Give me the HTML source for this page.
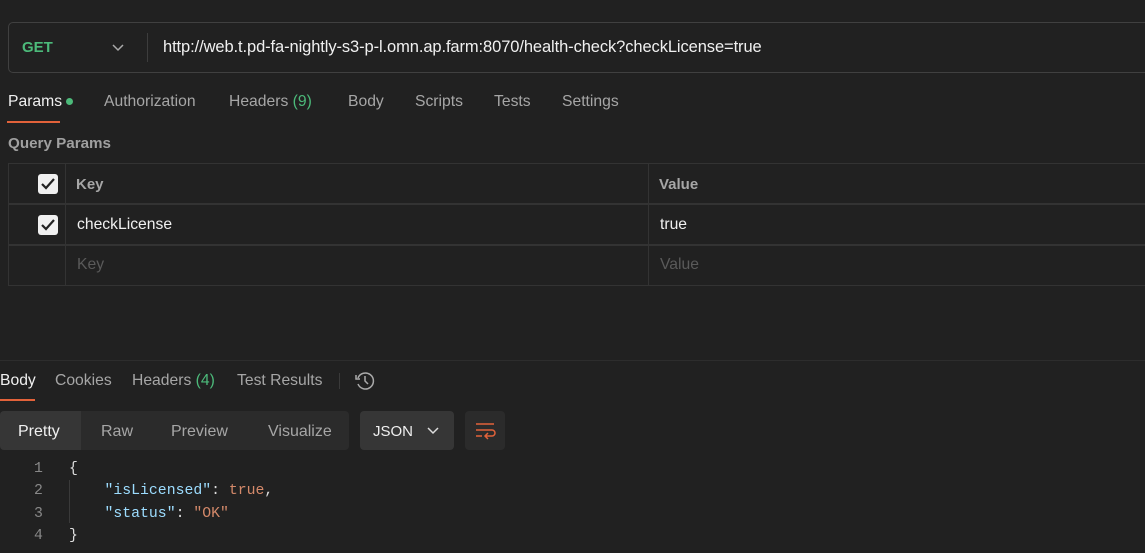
<!DOCTYPE html>
<html><head><style>
body{margin:0;width:1145px;height:553px;background:#212121;font-family:"Liberation Sans",sans-serif;color:#a6a6a6;position:relative;overflow:hidden;font-size:15.7px}
.a{position:absolute;white-space:nowrap}
.url{left:8px;top:22px;width:1150px;height:51px;border:1px solid #404040;border-radius:5px;box-sizing:border-box}
.tab{top:93px}
.row{position:absolute;left:8px;width:1140px;height:41px;border:1px solid #333;box-sizing:border-box}
.cb{position:absolute;width:20px;height:20px;background:#f0f0f0;border-radius:3px}
.mono{font-family:"Liberation Mono",monospace;font-size:14.8px}
</style></head><body>
<div class="a url"></div>
<div class="a" style="left:22px;top:39px;color:#4cba7a;font-weight:bold;font-size:15px">GET</div>
<svg class="a" style="left:112px;top:44px" width="12" height="8"><path d="M1 1l5 5 5-5" stroke="#aaa" stroke-width="1.5" fill="none"/></svg>
<div class="a" style="left:147px;top:33px;width:1px;height:29px;background:#3d3d3d"></div>
<div class="a" style="left:163px;top:38px;color:#f0f0f0;font-size:16.5px;letter-spacing:-0.1px">http://web.t.pd-fa-nightly-s3-p-l.omn.ap.farm:8070/health-check?checkLicense=true</div>

<div class="a tab" style="left:8px;color:#f0f0f0">Params <span style="display:inline-block;width:7px;height:7px;border-radius:50%;background:#4cba7a;vertical-align:middle"></span></div>
<div class="a" style="left:7px;top:121px;width:53px;height:2px;background:#e2623a"></div>
<div class="a tab" style="left:104px">Authorization</div>
<div class="a tab" style="left:229px">Headers <span style="color:#4cba7a">(9)</span></div>
<div class="a tab" style="left:348px">Body</div>
<div class="a tab" style="left:415px">Scripts</div>
<div class="a tab" style="left:494px">Tests</div>
<div class="a tab" style="left:562px">Settings</div>
<div class="a" style="left:8px;top:135px;font-size:15.2px;font-weight:bold;color:#a0a0a0">Query Params</div>

<div class="row" style="top:163px"></div>
<div class="row" style="top:204px"></div>
<div class="row" style="top:245px"></div>
<div class="a" style="left:65px;top:163px;width:1px;height:123px;background:#333"></div>
<div class="a" style="left:648px;top:163px;width:1px;height:123px;background:#333"></div>
<div class="cb" style="left:38px;top:174px"><svg width="20" height="20"><path d="M4 10l4 4 8-9" stroke="#222" stroke-width="2.2" fill="none"/></svg></div>
<div class="cb" style="left:38px;top:215px"><svg width="20" height="20"><path d="M4 10l4 4 8-9" stroke="#222" stroke-width="2.2" fill="none"/></svg></div>
<div class="a" style="left:76px;top:176px;font-weight:bold;font-size:15px;color:#a6a6a6">Key</div>
<div class="a" style="left:659px;top:176px;font-weight:bold;font-size:15px;color:#a6a6a6">Value</div>
<div class="a" style="left:77px;top:216px;color:#f0f0f0">checkLicense</div>
<div class="a" style="left:660px;top:216px;color:#f0f0f0">true</div>
<div class="a" style="left:77px;top:256px;color:#5a5a5a">Key</div>
<div class="a" style="left:660px;top:256px;color:#5a5a5a">Value</div>

<div class="a" style="left:0;top:360px;width:1145px;height:1px;background:#2d2d2d"></div>
<div class="a" style="left:0;top:372px;color:#f0f0f0">Body</div>
<div class="a" style="left:0;top:399px;width:35px;height:2px;background:#e2623a"></div>
<div class="a" style="left:55px;top:372px">Cookies</div>
<div class="a" style="left:132px;top:372px">Headers <span style="color:#4cba7a">(4)</span></div>
<div class="a" style="left:237px;top:372px">Test Results</div>
<div class="a" style="left:339px;top:373px;width:1px;height:16px;background:#3a3a3a"></div>
<svg class="a" style="left:354px;top:370px" width="22" height="22" fill="none" stroke="#aaa" stroke-width="1.5"><path d="M4 8A8 8 0 1 1 4 14"/><path d="M2 5v4h4"/><path d="M11 6v5l3 3"/></svg>

<div class="a" style="left:0;top:411px;width:349px;height:39px;background:#2b2b2b;border-radius:4px"></div>
<div class="a" style="left:0;top:411px;width:81px;height:39px;background:#363636;border-radius:4px 0 0 4px"></div>
<div class="a" style="left:18px;top:423px;color:#f0f0f0;font-size:16px">Pretty</div>
<div class="a" style="left:101px;top:423px;font-size:16px">Raw</div>
<div class="a" style="left:171px;top:423px;font-size:16px">Preview</div>
<div class="a" style="left:268px;top:423px;font-size:16px">Visualize</div>
<div class="a" style="left:360px;top:411px;width:94px;height:39px;background:#363636;border-radius:4px"></div>
<div class="a" style="left:373px;top:423px;color:#f0f0f0;font-size:15px">JSON</div>
<svg class="a" style="left:427px;top:427px" width="12" height="8"><path d="M1 1l5 5 5-5" stroke="#ddd" stroke-width="1.5" fill="none"/></svg>
<div class="a" style="left:465px;top:411px;width:40px;height:39px;background:#2b2b2b;border-radius:4px"></div>
<svg class="a" style="left:474px;top:420px" width="22" height="22" fill="none" stroke="#e2623a" stroke-width="1.5"><path d="M2 4h18M2 10h16a3 3 0 0 1 0 6h-6M14 13l-3 3 3 3M2 16h6"/></svg>

<div class="a mono" style="left:34px;top:458px;color:#888;line-height:22.4px">1<br>2<br>3<br>4</div>
<div class="a" style="left:69px;top:480px;width:1px;height:43px;background:#3a3a3a"></div>
<div class="a mono" style="left:69px;top:458px;line-height:22.4px;color:#ddd">{<br>&nbsp;&nbsp;&nbsp;&nbsp;<span style="color:#9cdcfe">"isLicensed"</span>: <span style="color:#d4896a">true</span>,<br>&nbsp;&nbsp;&nbsp;&nbsp;<span style="color:#9cdcfe">"status"</span>: <span style="color:#d4896a">"OK"</span><br>}</div>
</body></html>
